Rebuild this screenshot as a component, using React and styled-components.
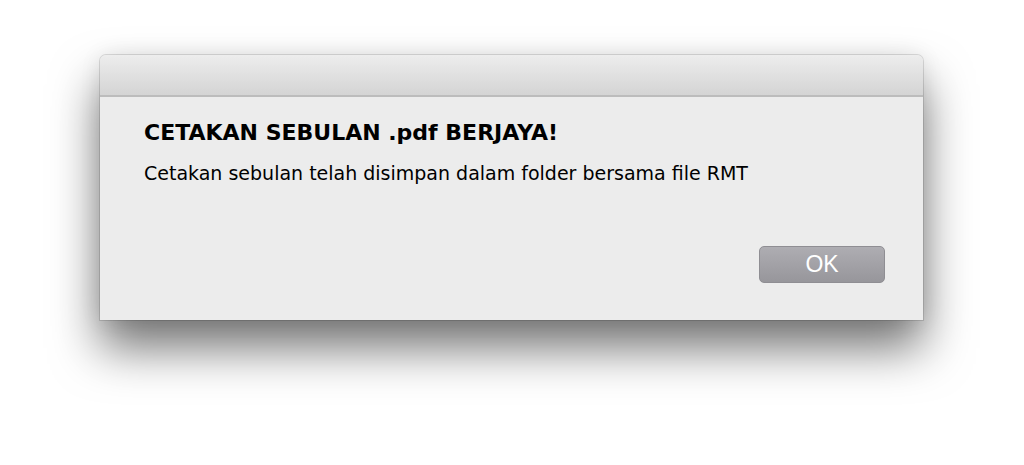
import styled, { createGlobalStyle } from "styled-components"

const GlobalStyle = createGlobalStyle`
    html, body {
        margin: 0;
        padding: 0;
        background: #ffffff;
    }
`

const Page = styled.div`
    width: 1024px;
    height: 465px;
    box-sizing: border-box;
    padding: 55px 0 0 100px;
    background: #ffffff;
    overflow: hidden;
`

const Window = styled.div`
    width: 823px;
    display: flex;
    flex-direction: column;
    border-radius: 6px 6px 0 0;
    background: #ececec;
    box-shadow: 0 0 0 1px rgba(0, 0, 0, 0.12), 0 28px 48px rgba(0, 0, 0, 0.55), 0 0 22px rgba(0, 0, 0, 0.08);
`

const TitleBar = styled.div`
    height: 40px;
    border-radius: 6px 6px 0 0;
    background: linear-gradient(#ededed, #d4d4d4);
    border-bottom: 2px solid #bcbcbc;
`

const Body = styled.div`
    height: 223px;
    box-sizing: border-box;
    padding: 23px 38px 37px 44px;
    display: flex;
    flex-direction: column;
    font-family: "DejaVu Sans", Verdana, sans-serif;
    color: #000;
`

const Heading = styled.div`
    font-size: 22px;
    font-weight: bold;
    line-height: 26px;
`

const Message = styled.div`
    margin-top: 16px;
    font-size: 19px;
    line-height: 22px;
`

const Actions = styled.div`
    margin-top: auto;
    display: flex;
    justify-content: flex-end;
`

const Button = styled.button`
    width: 126px;
    height: 37px;
    border: 1px solid #8f8e93;
    border-radius: 5px;
    background: linear-gradient(#aeadb2, #97969b);
    color: #ffffff;
    font-family: "Liberation Sans", Arial, sans-serif;
    font-size: 23px;
    line-height: 1;
    padding: 0;
    cursor: pointer;
`

const App = () => {
    return (
        <>
            <GlobalStyle />
            <Page>
                <Window>
                    <TitleBar />
                    <Body>
                        <Heading>CETAKAN SEBULAN .pdf BERJAYA!</Heading>
                        <Message>Cetakan sebulan telah disimpan dalam folder bersama file RMT</Message>
                        <Actions>
                            <Button>OK</Button>
                        </Actions>
                    </Body>
                </Window>
            </Page>
        </>
    )
}

export default App
